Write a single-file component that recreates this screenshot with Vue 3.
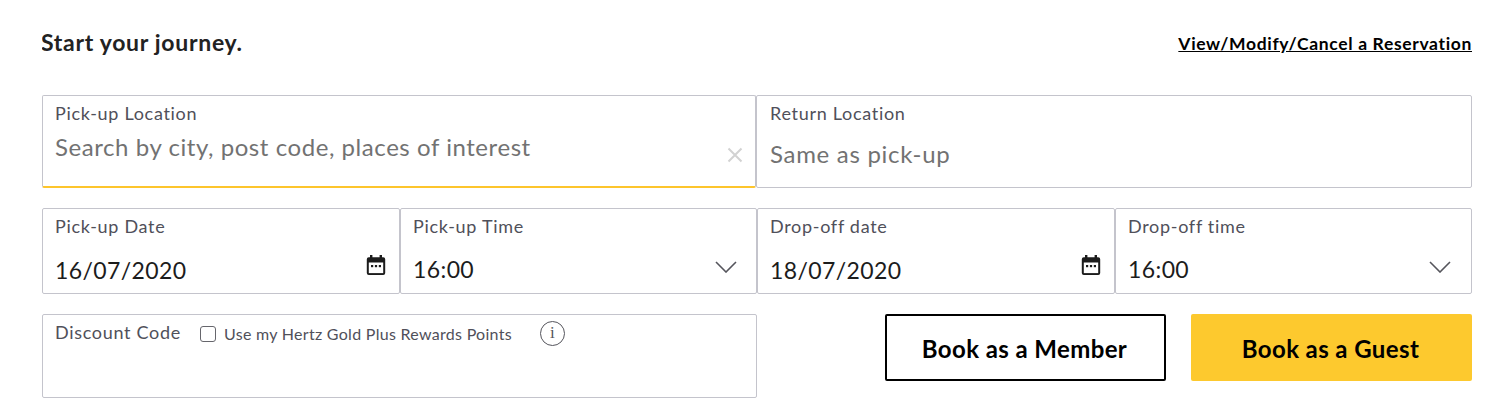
<script setup>
const dates = [
  { label: 'Pick-up Date', value: '16/07/2020', type: 'date' },
  { label: 'Pick-up Time', value: '16:00', type: 'time' },
  { label: 'Drop-off date', value: '18/07/2020', type: 'date' },
  { label: 'Drop-off time', value: '16:00', type: 'time' },
]
</script>

<template>
  <main class="page">
    <header class="top">
      <h1>Start your journey.</h1>
      <a href="#">View/Modify/Cancel a Reservation</a>
    </header>

    <section class="row locations">
      <div class="field active">
        <label>Pick-up Location</label>
        <div class="placeholder search">Search by city, post code, places of interest</div>
        <svg class="clear" width="16" height="16" viewBox="0 0 16 16"><path d="M1.5 1.5l13 13M14.500 1.500l-13 13" /></svg>
      </div>
      <div class="field return">
        <label>Return Location</label>
        <div class="placeholder same">Same as pick-up</div>
      </div>
    </section>

    <section class="row dates">
      <div v-for="d in dates" :key="d.label" class="field dt">
        <label>{{ d.label }}</label>
        <div class="value" :class="d.type">{{ d.value }}</div>
        <svg v-if="d.type === 'date'" class="cal" width="20" height="22" viewBox="0 0 20 22">
          <path fill="#1c1c1c" d="M4 0h2.400v2.200h7.200V0H16v2.200h1.200A2 2 0 0 1 19.200 4.200V18a2 2 0 0 1-2 2H2.800a2 2 0 0 1-2-2V4.200a2 2 0 0 1 2-2H4z" />
          <rect x="2.800" y="7.500" width="14.400" height="10.600" fill="#fff" />
          <rect x="5" y="10" width="2.200" height="2.200" fill="#1c1c1c" />
          <rect x="8.900" y="10" width="2.200" height="2.200" fill="#1c1c1c" />
          <rect x="12.800" y="10" width="2.200" height="2.200" fill="#1c1c1c" />
        </svg>
        <svg v-else class="chev" width="22" height="12" viewBox="0 0 22 12"><path d="M1 1l10 10L21 1" /></svg>
      </div>
    </section>

    <section class="row bottom">
      <div class="field discount">
        <label>Discount Code</label>
        <span class="check"></span>
        <span class="rewards">Use my Hertz Gold Plus Rewards Points</span>
        <span class="info">i</span>
      </div>
      <div class="actions">
        <button class="member">Book as a Member</button>
        <button class="guest">Book as a Guest</button>
      </div>
    </section>
  </main>
</template>

<style scoped>
.page {
  width: 1430px;
  height: 406px;
  box-sizing: border-box;
  margin-left: 42px;
  padding-top: 29px;
  font-family: Lato, "Open Sans", sans-serif;
  color: #1c1c1c;
  overflow: hidden;
}
.top {
  display: flex;
  justify-content: space-between;
  align-items: center;
  height: 28px;
  margin-bottom: 38px;
}
h1 {
  margin: 0 0 2px -1px;
  font-size: 23px;
  line-height: 28px;
  font-weight: 700;
  letter-spacing: 0.7px;
  color: #222;
}
a {
  font-size: 17.500px;
  font-weight: 700;
  color: #000;
  letter-spacing: 0.65px;
}
.row { display: grid; }
.locations { grid-template-columns: 714px 716px; height: 93px; margin-bottom: 20px; }
.dates { grid-template-columns: 358px 357px 358px 357px; height: 86px; margin-bottom: 20px; }
.bottom { grid-template-columns: 715px 715px; }
.field {
  position: relative;
  box-sizing: border-box;
  border: 1px solid #c4c4cc;
  border-radius: 2px;
  background: #fff;
  padding: 7px 12px 0;
}
.return { padding-left: 13px; }
.active { border-bottom: 2px solid #fdc52c; }
label {
  display: block;
  font-size: 18px;
  line-height: 21px;
  color: #50505a;
  letter-spacing: 0.7px;
}
.placeholder {
  font-size: 24px;
  line-height: 30px;
  color: #727272;
  letter-spacing: 0.56px;
}
.search { margin-top: 8px; }
.same { margin-top: 15px; letter-spacing: 0.7px; }
.clear {
  position: absolute;
  right: 12px;
  bottom: 23px;
}
.clear path { fill: none; stroke: #d2d2d2; stroke-width: 2; }
.value {
  font-size: 23px;
  line-height: 30px;
  color: #1c1c1c;
  letter-spacing: 0.4px;
}
.value.date { margin-top: 18px; }
.value.time { margin-top: 17px; }
.cal { position: absolute; right: 13px; top: 46px; }
.chev { position: absolute; right: 19px; top: 52px; }
.dt:last-child .chev { right: 20px; }
.chev path { fill: none; stroke: #55555c; stroke-width: 1.600; }
.discount {
  height: 84px;
  display: flex;
  align-items: flex-start;
}
.check {
  width: 16px;
  height: 16px;
  box-sizing: border-box;
  border: 1.500px solid #66666c;
  border-radius: 3px;
  margin: 4px 0 0 19px;
}
.rewards {
  font-size: 16px;
  line-height: 21px;
  color: #50505a;
  margin: 1px 0 0 8px;
  letter-spacing: 0.29px;
}
.info {
  width: 25px;
  height: 25px;
  box-sizing: border-box;
  border: 1.500px solid #55555c;
  border-radius: 50%;
  margin: -1px 0 0 28px;
  font-family: "Liberation Serif", serif;
  font-size: 17px;
  line-height: 22px;
  text-align: center;
  color: #55555c;
}
.actions {
  display: flex;
  justify-content: flex-end;
  gap: 25px;
}
button {
  width: 281px;
  height: 67px;
  box-sizing: border-box;
  border-radius: 2px;
  font-family: inherit;
  font-size: 24px;
  font-weight: 700;
  color: #000;
  letter-spacing: 0.4px;
  padding: 1px 2px 0 0;
}
.member { background: #fff; border: 2px solid #000; }
.guest { background: #fdc92e; border: 0; }
</style>
